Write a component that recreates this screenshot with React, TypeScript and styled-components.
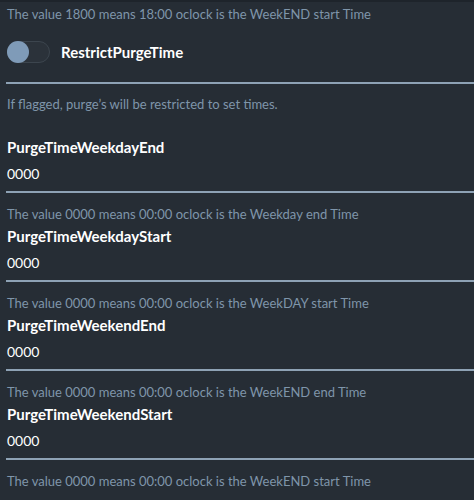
import React from 'react';
import styled, { createGlobalStyle } from 'styled-components';

const GlobalStyle = createGlobalStyle`
  html, body {
    margin: 0;
    padding: 0;
    background: #262d35;
  }
  body {
    font-family: Lato, "Noto Sans", "Liberation Sans", sans-serif;
    color: #ffffff;
  }
`;

const Page = styled.div`
  min-height: 500px;
  background: #262d35;
  border-top: 2px solid #1e242b;
  padding: 0 0 0 7px;
  box-sizing: border-box;
`;

const Hint = styled.div<{ $top?: number }>`
  font-size: 13px;
  line-height: 22px;
  margin-top: ${({ $top = 0 }) => $top}px;
  color: #7f95aa;
  white-space: nowrap;
`;

const TopHint = styled(Hint)`
  height: 24px;
  line-height: 24px;
`;

const ToggleRow = styled.div`
  display: flex;
  align-items: center;
  gap: 11px;
  height: 22px;
  margin-top: 15px;
`;

const Track = styled.div`
  position: relative;
  width: 41px;
  height: 20px;
  border-radius: 11px;
  background: #2b323a;
  border: 1px solid #3c454e;
`;

const Knob = styled.div`
  position: absolute;
  left: -1px;
  top: -1px;
  width: 22px;
  height: 22px;
  border-radius: 50%;
  background: #7f9bb8;
`;

const ToggleLabel = styled.span`
  font-size: 15px;
  font-weight: 700;
  color: #ffffff;
`;

const Divider = styled.div<{ $gap: number }>`
  height: 2px;
  margin-left: -1px;
  margin-top: ${({ $gap }) => $gap}px;
  background: #8ea2b5;
`;

const Field = styled.div<{ $first?: boolean }>`
  display: flex;
  flex-direction: column;
  margin-top: ${({ $first }) => ($first ? 21 : 0)}px;
`;

const FieldTitle = styled.div`
  font-size: 15px;
  font-weight: 700;
  line-height: 22px;
  color: #ffffff;
`;

const FieldValue = styled.div`
  font-size: 14px;
  line-height: 22px;
  margin-top: 5px;
  color: #ffffff;
`;

const fields = [
  { name: 'PurgeTimeWeekdayEnd', value: '0000', hint: 'The value 0000 means 00:00 oclock is the Weekday end Time' },
  { name: 'PurgeTimeWeekdayStart', value: '0000', hint: 'The value 0000 means 00:00 oclock is the WeekDAY start Time' },
  { name: 'PurgeTimeWeekendEnd', value: '0000', hint: 'The value 0000 means 00:00 oclock is the WeekEND end Time' },
  { name: 'PurgeTimeWeekendStart', value: '0000', hint: 'The value 0000 means 00:00 oclock is the WeekEND start Time' },
];

export default function App() {
  return (
    <>
      <GlobalStyle />
      <Page>
        <TopHint>The value 1800 means 18:00 oclock is the WeekEND start Time</TopHint>
        <ToggleRow>
          <Track>
            <Knob />
          </Track>
          <ToggleLabel>RestrictPurgeTime</ToggleLabel>
        </ToggleRow>
        <Divider $gap={19} />
        <Hint $top={9}>If flagged, purge’s will be restricted to set times.</Hint>
        {fields.map((f, i) => (
          <Field key={f.name} $first={i === 0}>
            <FieldTitle>{f.name}</FieldTitle>
            <FieldValue>{f.value}</FieldValue>
            <Divider $gap={6} />
            <Hint $top={10}>{f.hint}</Hint>
          </Field>
        ))}
      </Page>
    </>
  );
}
